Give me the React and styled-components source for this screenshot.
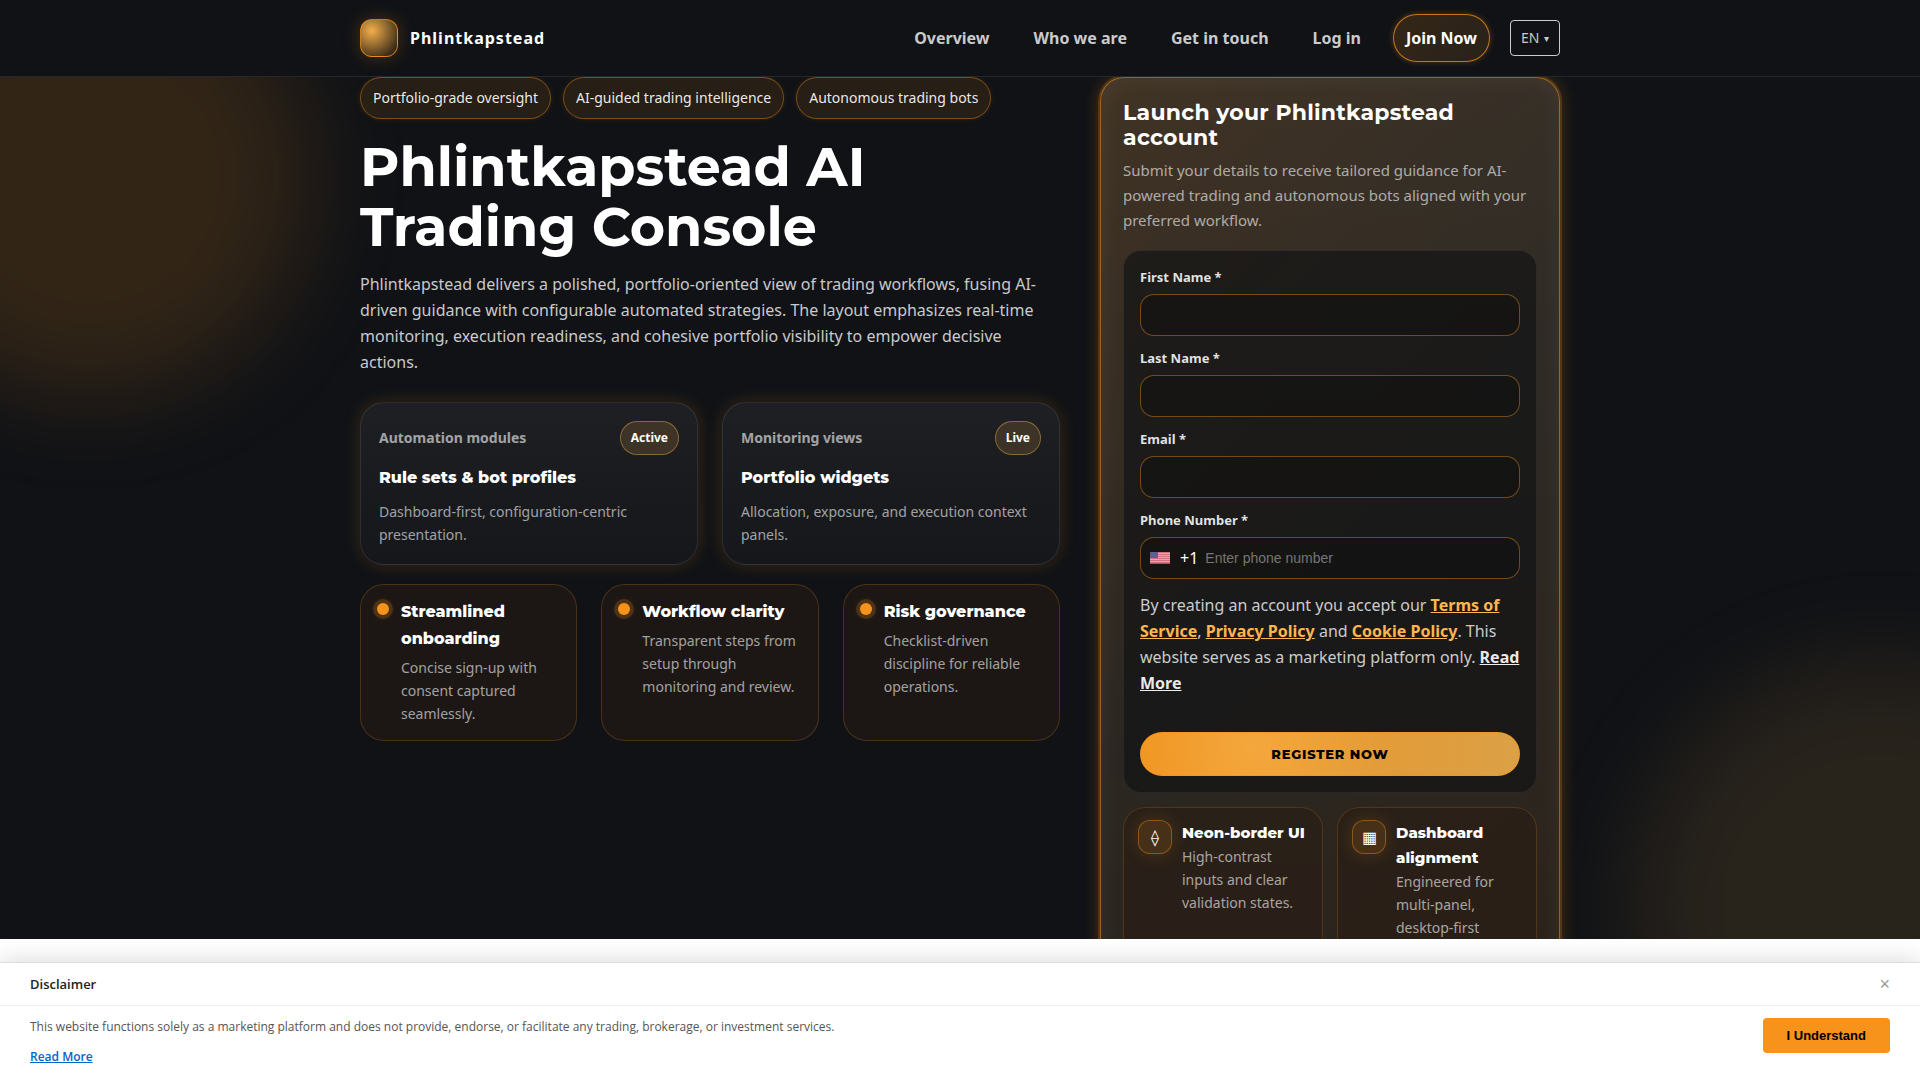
import React from 'react';
import styled, { createGlobalStyle, css } from 'styled-components';

const COLORS = {
  page: '#101216',
  white: '#ffffff',
  orange: '#f7931a',
  amber: '#ffb74d',
  text: 'rgba(255, 255, 255, 0.78)',
  muted: 'rgba(255, 255, 255, 0.6)',
  line: 'rgba(255, 255, 255, 0.09)',
};

const FONTS = {
  body: "'Noto Sans', 'Open Sans', sans-serif",
  heading: "'Montserrat', 'Open Sans', sans-serif",
  notice: "'Open Sans', 'Noto Sans', sans-serif",
  plain: "'Liberation Sans', Arial, sans-serif",
};

const NAV = ['Overview', 'Who we are', 'Get in touch', 'Log in'];

const CHIPS = [
  'Portfolio-grade oversight',
  'AI-guided trading intelligence',
  'Autonomous trading bots',
];

const MODULES = [
  {
    label: 'Automation modules',
    status: 'Active',
    title: 'Rule sets & bot profiles',
    text: 'Dashboard-first, configuration-centric presentation.',
  },
  {
    label: 'Monitoring views',
    status: 'Live',
    title: 'Portfolio widgets',
    text: 'Allocation, exposure, and execution context panels.',
  },
];

const POINTS = [
  { title: 'Streamlined onboarding', text: 'Concise sign-up with consent captured seamlessly.' },
  { title: 'Workflow clarity', text: 'Transparent steps from setup through monitoring and review.' },
  { title: 'Risk governance', text: 'Checklist-driven discipline for reliable operations.' },
];

const FIELDS = [
  { id: 'first-name', label: 'First Name *', type: 'text' },
  { id: 'last-name', label: 'Last Name *', type: 'text' },
  { id: 'email', label: 'Email *', type: 'email' },
];

const PERKS = [
  { icon: '⟠', title: 'Neon-border UI', text: 'High-contrast inputs and clear validation states.' },
  { icon: '▦', title: 'Dashboard alignment', text: 'Engineered for multi-panel, desktop-first' },
];

const Flag = () => (
  <FlagSvg viewBox="0 0 20 12" aria-hidden="true">
    <rect width="20" height="12" fill="#e8a3ab" />
    {[0, 2, 4, 6, 8, 10].map((y) => (
      <rect key={y} y={y} width="20" height="1" fill="#d0707f" />
    ))}
    <rect y="11" width="20" height="1" fill="#c9485b" />
    <rect width="8" height="6" fill="#5c5f90" />
  </FlagSvg>
);

const Header = () => (
  <HeaderBar>
    <HeaderInner>
      <Brand href="#">
        <BrandMark />
        Phlintkapstead
      </Brand>
      <Nav>
        {NAV.map((item) => (
          <NavLink key={item} href="#">{item}</NavLink>
        ))}
        <JoinLink href="#">Join Now</JoinLink>
        <Language>
          <select aria-label="Language" defaultValue="EN">
            <option>EN</option>
          </select>
          <span aria-hidden="true">▾</span>
        </Language>
      </Nav>
    </HeaderInner>
  </HeaderBar>
);

const Intro = () => (
  <IntroColumn>
    <ChipRow>
      {CHIPS.map((chip) => (
        <Chip key={chip}>{chip}</Chip>
      ))}
    </ChipRow>
    <Title>Phlintkapstead AI Trading Console</Title>
    <Lead>
      Phlintkapstead delivers a polished, portfolio-oriented view of trading workflows, fusing
      AI-driven guidance with configurable automated strategies. The layout emphasizes real-time
      monitoring, execution readiness, and cohesive portfolio visibility to empower decisive
      actions.
    </Lead>
    <ModuleGrid>
      {MODULES.map(({ label, status, title, text }) => (
        <ModuleCard key={title}>
          <ModuleTop>
            <ModuleLabel>{label}</ModuleLabel>
            <Status>{status}</Status>
          </ModuleTop>
          <CardTitle>{title}</CardTitle>
          <CardText>{text}</CardText>
        </ModuleCard>
      ))}
    </ModuleGrid>
    <PointGrid>
      {POINTS.map(({ title, text }) => (
        <PointCard key={title}>
          <Dot />
          <PointBody>
            <CardTitle>{title}</CardTitle>
            <CardText>{text}</CardText>
          </PointBody>
        </PointCard>
      ))}
    </PointGrid>
  </IntroColumn>
);

const SignUp = () => (
  <Panel>
    <PanelTitle>Launch your Phlintkapstead account</PanelTitle>
    <PanelText>
      Submit your details to receive tailored guidance for AI-powered trading and autonomous bots
      aligned with your preferred workflow.
    </PanelText>
    <Form onSubmit={(event) => event.preventDefault()}>
      {FIELDS.map(({ id, label, type }) => (
        <Field key={id}>
          <Label htmlFor={id}>{label}</Label>
          <Input id={id} type={type} />
        </Field>
      ))}
      <Field>
        <Label htmlFor="phone">Phone Number *</Label>
        <PhoneBox>
          <Flag />
          <DialCode>+1</DialCode>
          <PhoneInput id="phone" type="tel" placeholder="Enter phone number" />
        </PhoneBox>
      </Field>
      <Terms>
        By creating an account you accept our <TermsLink href="#">Terms of Service</TermsLink>,{' '}
        <TermsLink href="#">Privacy Policy</TermsLink> and{' '}
        <TermsLink href="#">Cookie Policy</TermsLink>. This website serves as a marketing platform
        only. <TermsLink href="#" $light>Read More</TermsLink>
      </Terms>
      <Register type="submit">REGISTER NOW</Register>
    </Form>
    <PerkGrid>
      {PERKS.map(({ icon, title, text }) => (
        <PerkCard key={title}>
          <PerkIcon>{icon}</PerkIcon>
          <div>
            <PerkTitle>{title}</PerkTitle>
            <PerkText>{text}</PerkText>
          </div>
        </PerkCard>
      ))}
    </PerkGrid>
  </Panel>
);

const Disclaimer = () => (
  <Banner aria-label="Disclaimer">
    <BannerHead>
      <BannerTitle>Disclaimer</BannerTitle>
      <CloseButton type="button" aria-label="Close">×</CloseButton>
    </BannerHead>
    <BannerBody>
      <div>
        <BannerText>
          This website functions solely as a marketing platform and does not provide, endorse, or
          facilitate any trading, brokerage, or investment services.
        </BannerText>
        <BannerLink href="#">Read More</BannerLink>
      </div>
      <AcceptButton type="button">I Understand</AcceptButton>
    </BannerBody>
  </Banner>
);

const App = () => (
  <Page>
    <GlobalStyle />
    <Header />
    <Main>
      <Glow $place="left" />
      <Glow $place="right" />
      <Hero>
        <Intro />
        <SignUp />
      </Hero>
    </Main>
    <Disclaimer />
  </Page>
);

const GlobalStyle = createGlobalStyle`
  *, *::before, *::after {
    box-sizing: border-box;
  }

  body {
    margin: 0;
    background: ${COLORS.white};
    font-family: ${FONTS.body};
    font-size: 16px;
    line-height: 26px;
  }

  h1, h2, h3, p {
    margin: 0;
  }

  a {
    text-decoration: none;
  }
`;

const Page = styled.div`
  display: flex;
  flex-direction: column;
  height: 100vh;
`;

const HeaderBar = styled.header`
  position: relative;
  z-index: 2;
  flex: none;
  padding: 14px 24px;
  border-bottom: 1px solid ${COLORS.line};
  background: ${COLORS.page};
`;

const HeaderInner = styled.div`
  display: flex;
  align-items: center;
  justify-content: space-between;
  max-width: 1200px;
  margin: 0 auto;
`;

const Brand = styled.a`
  display: flex;
  align-items: center;
  gap: 12px;
  color: ${COLORS.white};
  font-weight: 700;
  letter-spacing: 1px;
`;

const BrandMark = styled.span`
  width: 38px;
  height: 38px;
  border: 1px solid rgba(247, 147, 26, 0.75);
  border-radius: 12px;
  background:
    radial-gradient(circle at 30% 30%, rgba(255, 183, 77, 0.95), rgba(247, 147, 26, 0.15) 85%),
    ${COLORS.page};
  box-shadow: 0 0 18px rgba(247, 147, 26, 0.25);
`;

const Nav = styled.nav`
  display: flex;
  align-items: center;
  gap: 20px;
`;

const NavLink = styled.a`
  padding: 10px 12px;
  color: ${COLORS.text};
  font-weight: 700;
`;

const JoinLink = styled(NavLink)`
  border: 1px solid rgba(247, 147, 26, 0.75);
  border-radius: 24px;
  background: linear-gradient(135deg, rgba(247, 147, 26, 0.16), rgba(255, 183, 77, 0.1));
  box-shadow: 0 0 6px rgba(247, 147, 26, 0.3);
  color: ${COLORS.white};
`;

const Language = styled.label`
  display: flex;
  align-items: center;
  gap: 4px;
  height: 36px;
  padding: 0 10px;
  border: 1px solid ${COLORS.text};
  border-radius: 4px;
  color: ${COLORS.text};
  font-size: 14px;

  select {
    appearance: none;
    padding: 0;
    border: 0;
    background: none;
    color: inherit;
    font: inherit;
  }

  span {
    font-size: 10px;
  }
`;

const Main = styled.main`
  position: relative;
  flex: 1;
  min-height: 0;
  padding: 0 24px;
  background: ${COLORS.page};
  overflow: hidden;
`;

const Glow = styled.div`
  position: absolute;
  border-radius: 50%;
  filter: blur(48px);

  ${({ $place }) =>
    $place === 'left'
      ? css`
          top: -120px;
          left: -130px;
          width: 440px;
          height: 440px;
          background: rgba(247, 147, 26, 0.15);
        `
      : css`
          right: -210px;
          bottom: -220px;
          width: 500px;
          height: 500px;
          background: rgba(255, 183, 77, 0.1);
        `}
`;

const Hero = styled.div`
  position: relative;
  display: grid;
  grid-template-columns: minmax(0, 35fr) minmax(0, 23fr);
  align-items: start;
  gap: 40px;
  max-width: 1200px;
  margin: 0 auto;
`;

const IntroColumn = styled.section`
  display: flex;
  flex-direction: column;
`;

const ChipRow = styled.div`
  display: flex;
  flex-wrap: wrap;
  gap: 12px;
`;

const Chip = styled.span`
  padding: 9px 12px;
  border: 1px solid rgba(247, 147, 26, 0.4);
  border-radius: 21px;
  background: rgba(247, 147, 26, 0.1);
  box-shadow: 0 0 6px rgba(247, 147, 26, 0.12);
  color: rgba(255, 255, 255, 0.92);
  font-size: 14px;
  line-height: 22px;
`;

const Title = styled.h1`
  margin-top: 18px;
  color: ${COLORS.white};
  font-family: ${FONTS.heading};
  font-weight: 700;
  font-size: 54px;
  line-height: 60px;
`;

const Lead = styled.p`
  margin-top: 14px;
  color: ${COLORS.text};
`;

const ModuleGrid = styled.div`
  display: grid;
  grid-template-columns: repeat(2, minmax(0, 1fr));
  gap: 24px;
  margin-top: 27px;
`;

const ModuleCard = styled.article`
  padding: 18px;
  border: 1px solid ${COLORS.line};
  border-radius: 24px;
  background: linear-gradient(180deg, rgba(255, 255, 255, 0.06), rgba(255, 255, 255, 0.02)), ${COLORS.page};
  box-shadow: 0 0 18px rgba(247, 147, 26, 0.18);
`;

const ModuleTop = styled.div`
  display: flex;
  align-items: center;
  justify-content: space-between;
  margin-bottom: 9px;
`;

const ModuleLabel = styled.span`
  color: ${COLORS.muted};
  font-weight: 700;
  font-size: 14px;
`;

const Status = styled.span`
  padding: 6px 10px;
  border: 1px solid rgba(255, 183, 77, 0.4);
  border-radius: 17px;
  background: rgba(255, 183, 77, 0.15);
  color: ${COLORS.white};
  font-weight: 700;
  font-size: 12px;
  line-height: 20px;
`;

const CardTitle = styled.h3`
  color: ${COLORS.white};
  font-family: ${FONTS.heading};
  font-weight: 800;
  font-size: 16px;
  line-height: 27px;
`;

const CardText = styled.p`
  margin-top: 9px;
  color: ${COLORS.muted};
  font-size: 14px;
  line-height: 23px;
`;

const PointGrid = styled.div`
  display: grid;
  grid-template-columns: repeat(3, minmax(0, 1fr));
  gap: 24px;
  margin-top: 19px;
`;

const PointCard = styled.article`
  display: flex;
  gap: 12px;
  padding: 13px 12px 15px 16px;
  border: 1px solid rgba(247, 147, 26, 0.22);
  border-radius: 24px;
  background: rgba(247, 120, 26, 0.05);
`;

const PointBody = styled.div`
  min-width: 0;

  ${CardText} {
    margin-top: 4px;
  }
`;

const Dot = styled.span`
  flex: none;
  width: 12px;
  height: 12px;
  margin-top: 5px;
  border-radius: 50%;
  background: ${COLORS.orange};
  box-shadow: 0 0 0 4px rgba(247, 147, 26, 0.2), 0 0 12px rgba(247, 147, 26, 0.2);
`;

const Panel = styled.section`
  padding: 22px;
  border: 1px solid rgba(247, 147, 26, 0.55);
  border-radius: 24px;
  background:
    linear-gradient(180deg, rgba(255, 255, 255, 0.06), rgba(255, 255, 255, 0.02)),
    linear-gradient(
      135deg,
      rgba(247, 147, 26, 0.16) 0%,
      rgba(255, 183, 77, 0.09) 50%,
      rgba(247, 147, 26, 0.1) 100%
    );
  box-shadow:
    0 0 0 2px rgba(247, 147, 26, 0.18),
    0 0 18px rgba(247, 147, 26, 0.3),
    inset 0 0 24px rgba(255, 255, 255, 0.06);
`;

const PanelTitle = styled.h2`
  color: ${COLORS.white};
  font-family: ${FONTS.heading};
  font-weight: 700;
  font-size: 22px;
  line-height: 25px;
  letter-spacing: 0.01em;
`;

const PanelText = styled.p`
  margin: 8px 0 17px;
  color: ${COLORS.muted};
  font-size: 15px;
  line-height: 25px;
`;

const Form = styled.form`
  padding: 16px;
  border: 1px solid rgba(255, 255, 255, 0.07);
  border-radius: 18px;
  background: rgba(18, 19, 20, 0.68);
`;

const Field = styled.div`
  display: flex;
  flex-direction: column;
  gap: 7px;
  margin-bottom: 12px;
`;

const Label = styled.label`
  color: rgba(255, 255, 255, 0.88);
  font-weight: 700;
  font-size: 13px;
  line-height: 20px;
`;

const fieldBox = css`
  width: 100%;
  height: 42px;
  border: 1px solid rgba(247, 147, 26, 0.42);
  border-radius: 14px;
  background: rgba(0, 0, 0, 0.22);
`;

const Input = styled.input`
  ${fieldBox}
  padding: 0 12px;
  color: ${COLORS.white};
  font-size: 14px;
`;

const PhoneBox = styled.div`
  ${fieldBox}
  display: flex;
  align-items: center;
  padding: 0 9px;
`;

const FlagSvg = styled.svg`
  flex: none;
  width: 20px;
  height: 12px;
  margin-right: 10px;
`;

const DialCode = styled.span`
  margin-right: 7px;
  color: ${COLORS.white};
`;

const PhoneInput = styled.input`
  flex: 1;
  min-width: 0;
  padding: 0;
  border: 0;
  outline: 0;
  background: none;
  color: ${COLORS.white};
  font-family: ${FONTS.plain};
  font-size: 14px;

  &::placeholder {
    color: #757575;
  }
`;

const Terms = styled.p`
  margin-top: 13px;
  color: ${COLORS.text};
`;

const TermsLink = styled.a`
  color: ${({ $light }) => ($light ? 'rgba(255, 255, 255, 0.92)' : COLORS.amber)};
  font-weight: 700;
  text-decoration: underline;
`;

const Register = styled.button`
  display: block;
  width: 100%;
  height: 44px;
  margin-top: 36px;
  border: 1px solid rgba(247, 147, 26, 0.7);
  border-radius: 22px;
  background:
    radial-gradient(circle at 30% 30%, rgba(255, 183, 77, 0.5), transparent 50%),
    linear-gradient(90deg, #f09420, #dba046);
  color: #000000;
  font-family: ${FONTS.heading};
  font-weight: 800;
  font-size: 13px;
  letter-spacing: 0.06em;
`;

const PerkGrid = styled.div`
  display: grid;
  grid-template-columns: repeat(2, minmax(0, 1fr));
  gap: 14px;
  margin-top: 14px;
`;

const PerkCard = styled.article`
  display: flex;
  align-items: flex-start;
  gap: 10px;
  min-height: 180px;
  padding: 12px 14px;
  border: 1px solid rgba(247, 147, 26, 0.2);
  border-radius: 22px;
  background: rgba(40, 28, 20, 0.6);
`;

const PerkIcon = styled.span`
  display: flex;
  flex: none;
  align-items: center;
  justify-content: center;
  width: 34px;
  height: 34px;
  border: 1px solid rgba(247, 147, 26, 0.4);
  border-radius: 12px;
  background: rgba(247, 147, 26, 0.14);
  box-shadow: 0 0 18px rgba(247, 147, 26, 0.18);
  color: ${COLORS.white};
`;

const PerkTitle = styled(CardTitle)`
  font-size: 15px;
  line-height: 25px;
`;

const PerkText = styled.p`
  color: ${COLORS.muted};
  font-size: 14px;
  line-height: 23px;
`;

const Banner = styled.aside`
  position: relative;
  flex: none;
  margin-top: 23px;
  border-top: 1px solid #dddddd;
  background: ${COLORS.white};
  box-shadow: 0 -4px 20px rgba(0, 0, 0, 0.12);
  font-family: ${FONTS.notice};
`;

const BannerHead = styled.div`
  display: flex;
  align-items: center;
  justify-content: space-between;
  padding: 8px 30px;
  border-bottom: 1px solid #eeeeee;
`;

const BannerTitle = styled.h2`
  color: #222222;
  font-weight: 600;
  font-size: 13px;
  line-height: 26px;
`;

const CloseButton = styled.button`
  padding: 0;
  border: 0;
  background: none;
  color: #999999;
  font-family: ${FONTS.plain};
  font-size: 18px;
  line-height: 18px;
`;

const BannerBody = styled.div`
  display: flex;
  align-items: flex-start;
  justify-content: space-between;
  gap: 24px;
  padding: 12px 30px 14px;
`;

const BannerText = styled.p`
  margin-bottom: 12px;
  color: #555555;
  font-size: 12px;
  line-height: 18px;
`;

const BannerLink = styled.a`
  display: block;
  color: #0066cc;
  font-weight: 600;
  font-size: 12px;
  line-height: 18px;
  text-decoration: underline;
`;

const AcceptButton = styled.button`
  height: 35px;
  padding: 0 24px;
  border: 0;
  border-radius: 4px;
  background: ${COLORS.orange};
  color: #000000;
  font-family: ${FONTS.plain};
  font-weight: 700;
  font-size: 13px;
`;

export default App;
